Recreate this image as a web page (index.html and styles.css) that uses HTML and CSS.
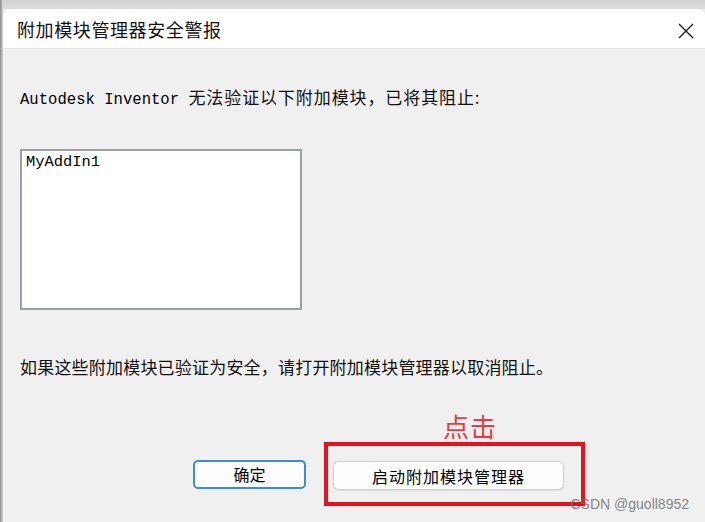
FILE: index.html
```html
<!DOCTYPE html>
<html lang="zh-CN">
<head>
    <meta charset="UTF-8">
    <meta name="viewport" content="width=device-width, initial-scale=1.0">
    <title>附加模块管理器安全警报</title>
    <link rel="stylesheet" href="styles.css">
</head>
<body>
    <div class="screen">
        <div class="dialog">
            <!-- Title bar -->
            <div class="titlebar">
                <span class="title">附加模块管理器安全警报</span>
                <svg class="close" width="16" height="16" viewBox="0 0 16 16">
                    <path d="M1 1L15 15M15 1L1 15" stroke="#1a1a1a" stroke-width="1.4" fill="none"/>
                </svg>
            </div>

            <!-- Body -->
            <div class="body">
                <p class="msg intro"><span class="mono">Autodesk Inventor </span>无法验证以下附加模块，已将其阻止:</p>

                <div class="listbox">
                    <div class="item">MyAddIn1</div>
                </div>

                <p class="msg hint">如果这些附加模块已验证为安全，请打开附加模块管理器以取消阻止。</p>

                <div class="actions">
                    <button class="btn btn-default">确定</button>
                    <div class="callout">
                        <span class="callout-label">点击</span>
                        <button class="btn btn-wide">启动附加模块管理器</button>
                    </div>
                </div>
            </div>
        </div>
        <div class="watermark">CSDN @guoll8952</div>
    </div>
</body>
</html>
```

FILE: styles.css
```css
* {
    margin: 0;
    padding: 0;
    box-sizing: border-box;
}

body {
    background: #f0f0f0;
    font-family: "Noto Sans CJK SC", sans-serif;
    color: #000;
}

.screen {
    position: relative;
    width: 705px;
    height: 522px;
    overflow: hidden;
    padding-top: 9px;
    padding-left: 3px;
    background:
        linear-gradient(to right, #8e8e8e 0, #b8b8b8 2px, #e2e2e2 3px, transparent 4px),
        linear-gradient(to bottom, #d2d2d2 0, #dcdcdc 9px, #f0f0f0 9px);
}

/* Dialog */
.dialog {
    width: 702px;
    height: 513px;
    background: #f0f0f0;
    border-radius: 8px 8px 0 0;
    overflow: hidden;
}

.titlebar {
    height: 40px;
    background: #fff;
    display: flex;
    align-items: center;
    justify-content: space-between;
    padding: 0 11px 0 14px;
    border-bottom: 1px solid #e8e8e8;
}

.title {
    font-size: 18px;
    letter-spacing: 0.6px;
    color: #111;
}

.close {
    margin-top: 4px;
}

.body {
    padding: 38px 0 0 17px;
}

.msg {
    font-size: 17px;
    line-height: 20px;
    height: 20px;
    white-space: nowrap;
    color: #111;
}

.intro {
    letter-spacing: 0.9px;
}

.mono {
    font-family: "Liberation Mono", monospace;
    font-size: 15.6px;
    letter-spacing: 0;
    color: #000;
}

/* List box */
.listbox {
    margin-top: 42px;
    width: 282px;
    height: 161px;
    background: #fff;
    border: 2px solid #9ca1a8;
    padding: 2px 4px;
}

.item {
    font-family: "Liberation Mono", monospace;
    font-size: 15.4px;
    line-height: 18px;
    color: #000;
}

.hint {
    margin-top: 47px;
    letter-spacing: 0.2px;
}

/* Buttons */
.actions {
    margin-top: 65px;
    margin-left: 173px;
    display: flex;
    align-items: center;
    gap: 18px;
}

.btn {
    font-family: "Noto Sans CJK SC", sans-serif;
    font-size: 16px;
    height: 29px;
    background: #fdfdfd;
    border: 1px solid #cfcfcf;
    border-radius: 5px;
    color: #000;
}

.btn-default {
    width: 113px;
    border: 2px solid #3b8ddb;
}

.btn-wide {
    width: 231px;
    letter-spacing: 1px;
    box-shadow: 0 1px 1px rgba(0, 0, 0, 0.08);
}

/* Red annotation around the manager button */
.callout {
    position: relative;
    width: 261px;
    height: 64px;
    border: 4px solid #e8101c;
    padding: 15px 0 0 5px;
}

.callout-label {
    position: absolute;
    left: 115px;
    top: -34px;
    font-size: 26px;
    line-height: 28px;
    color: #ee3a3f;
    letter-spacing: 1px;
}

.watermark {
    position: absolute;
    right: 16px;
    bottom: 10px;
    font-family: "Liberation Sans", sans-serif;
    font-size: 14px;
    color: rgba(110, 110, 110, 0.85);
}
```
